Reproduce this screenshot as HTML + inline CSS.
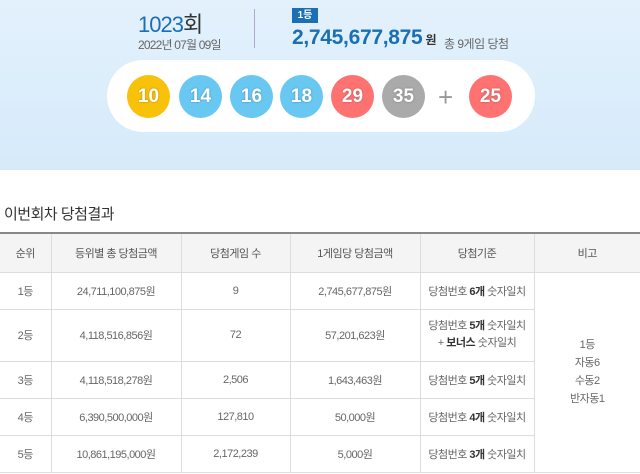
<!DOCTYPE html>
<html><head><meta charset="utf-8"><style>
*{margin:0;padding:0;box-sizing:border-box}
body{width:640px;height:474px;overflow:hidden;background:#fff;font-family:"Liberation Sans","Noto Sans CJK KR",sans-serif;position:relative}
.hd{position:absolute;left:0;top:0;width:640px;height:170px;background:linear-gradient(#e3f1fc,#d6eafa)}
.abs{position:absolute;white-space:nowrap}
.pill{position:absolute;left:107px;top:60px;width:428px;height:72px;border-radius:36px;background:#fff}
.b{position:absolute;top:75px;width:43px;height:43px;border-radius:50%;color:#fff;font-weight:bold;font-size:19px;text-align:center;line-height:43px;text-shadow:0 0 2px rgba(0,0,0,.3)}
table{position:absolute;left:0;top:232px;width:640px;border-collapse:collapse;font-size:11px;color:#666;letter-spacing:-0.5px}
td,th{border:1px solid #ddd;text-align:center;font-weight:normal;vertical-align:middle}
th{background:#f4f4f4;height:39px;color:#555;border-top:2px solid #888}
td{height:37px}
tr td:first-child,tr th:first-child{border-left:none}
tr td:last-child,tr th:last-child{border-right:none}
b{color:#333}
</style></head><body>
<div class="hd"></div>
<div class="abs" style="left:138px;top:7px;font-size:22px;color:#1a6fb5;letter-spacing:-1px">1023<span style="color:#333">회</span></div>
<div class="abs" style="left:138px;top:36px;font-size:12px;color:#666;letter-spacing:-0.8px">2022년 07월 09일</div>
<div class="abs" style="left:254px;top:9px;width:1px;height:39px;background:#aac"></div>
<div class="abs" style="left:292px;top:8px;width:26px;height:15px;background:#1a6fb5;color:#fff;font-size:10px;font-weight:bold;text-align:center;line-height:15px">1등</div>
<div class="abs" style="left:292px;top:26px;font-size:21px;font-weight:bold;color:#1a6fb5;letter-spacing:-0.3px">2,745,677,875<span style="font-size:12px;color:#333"> 원</span></div>
<div class="abs" style="left:444px;top:35px;font-size:12px;color:#666;letter-spacing:-0.5px">총 9게임 당첨</div>
<div class="pill"></div>
<div class="b" style="left:127px;background:#f9c20a">10</div>
<div class="b" style="left:179px;background:#69c8f2">14</div>
<div class="b" style="left:230px;background:#69c8f2">16</div>
<div class="b" style="left:280px;background:#69c8f2">18</div>
<div class="b" style="left:331px;background:#ff7272">29</div>
<div class="b" style="left:382px;background:#aaa">35</div>
<div class="abs" style="left:438px;top:82px;font-size:26px;color:#999">+</div>
<div class="b" style="left:469px;background:#ff7272">25</div>
<div class="abs" style="left:4px;top:203px;font-size:15px;color:#333;letter-spacing:-0.5px">이번회차 당첨결과</div>
<table>
<tr><th style="width:51px">순위</th><th style="width:130px">등위별 총 당첨금액</th><th style="width:109px">당첨게임 수</th><th style="width:130px">1게임당 당첨금액</th><th style="width:114px">당첨기준</th><th>비고</th></tr>
<tr><td>1등</td><td>24,711,100,875원</td><td>9</td><td>2,745,677,875원</td><td>당첨번호 <b>6개</b> 숫자일치</td><td rowspan="5" style="line-height:18px">1등<br>자동6<br>수동2<br>반자동1</td></tr>
<tr><td style="height:52px">2등</td><td>4,118,516,856원</td><td>72</td><td>57,201,623원</td><td style="line-height:17px">당첨번호 <b>5개</b> 숫자일치<br>+ <b>보너스</b> 숫자일치</td></tr>
<tr><td>3등</td><td>4,118,518,278원</td><td>2,506</td><td>1,643,463원</td><td>당첨번호 <b>5개</b> 숫자일치</td></tr>
<tr><td>4등</td><td>6,390,500,000원</td><td>127,810</td><td>50,000원</td><td>당첨번호 <b>4개</b> 숫자일치</td></tr>
<tr><td>5등</td><td>10,861,195,000원</td><td>2,172,239</td><td>5,000원</td><td>당첨번호 <b>3개</b> 숫자일치</td></tr>
</table>
</body></html>
